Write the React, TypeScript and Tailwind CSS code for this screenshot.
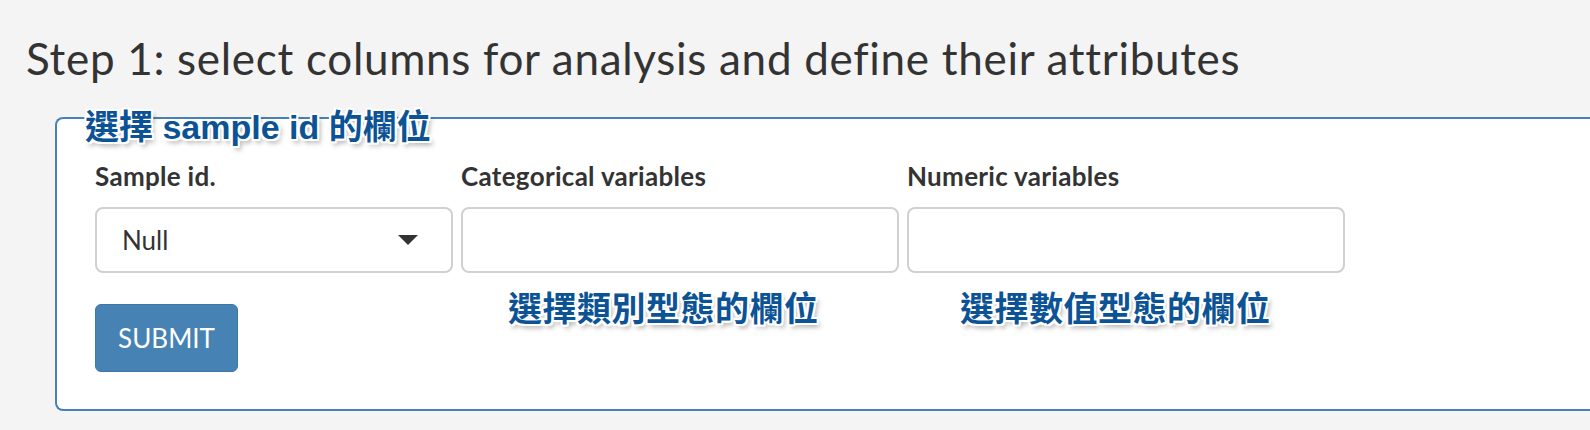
const latin = "font-['Lato','Liberation_Sans',sans-serif]";

// white halo + soft drop shadow used by the blue annotation labels
const note =
  "font-['Liberation_Sans','Noto_Sans_CJK_TC',sans-serif] font-bold text-[34px] leading-[40px] text-[#0b5394] whitespace-nowrap [text-shadow:2px_0_0_#fff,-2px_0_0_#fff,0_2px_0_#fff,0_-2px_0_#fff,2px_2px_0_#fff,-2px_-2px_0_#fff,2px_-2px_0_#fff,-2px_2px_0_#fff,3px_4px_5px_rgba(0,0,0,0.35)]";

function Field({ label, children }: { label: string; children?: React.ReactNode }) {
  return (
    <div className="flex flex-col">
      <label className="text-[26px] leading-[30px] font-bold tracking-[0.3px] text-[#333]">{label}</label>
      <div className="mt-4 h-[66px] rounded-lg border-2 border-[#d0d0d0] bg-white flex items-center">
        {children}
      </div>
    </div>
  );
}

export default function App() {
  return (
    <div className={`${latin} bg-[#f4f4f4] w-full h-[430px] overflow-hidden pt-[36px]`}>
      <h2 className="pl-[26px] text-[44px] leading-[44px] tracking-[0.7px] font-normal text-[#333] whitespace-nowrap">
        Step 1: select columns for analysis and define their attributes
      </h2>

      <div className="relative mt-[37px] ml-[55px] h-[294px] bg-white border-2 border-r-0 border-[#4682b4] rounded-l-lg pl-[38px] pt-[42px]">
        {/* legend sits over the top border */}
        <span className={`${note} absolute left-[28px] top-[-12px]`}>選擇 sample id 的欄位</span>

        <div className="grid grid-cols-[358px_438px_438px] gap-x-2">
          <Field label="Sample id.">
            <span className="pl-[25px] text-[26px] text-[#333] flex-1">Null</span>
            <svg width="20" height="10" viewBox="0 0 20 10" className="mr-[33px]">
              <polygon points="0,0 20,0 10,10" fill="#333" />
            </svg>
          </Field>
          <Field label="Categorical variables" />
          <Field label="Numeric variables" />

          <div className="mt-[31px]">
            <button className="w-[143px] h-[68px] rounded-md bg-[#4682b4] border border-[#3d77a8] text-white text-[26px] uppercase">
              Submit
            </button>
          </div>
          <div className={`${note} mt-[16px] pl-[47px] tracking-[0.5px]`}>選擇類別型態的欄位</div>
          <div className={`${note} mt-[16px] pl-[53px] tracking-[0.5px]`}>選擇數值型態的欄位</div>
        </div>
      </div>
    </div>
  );
}
